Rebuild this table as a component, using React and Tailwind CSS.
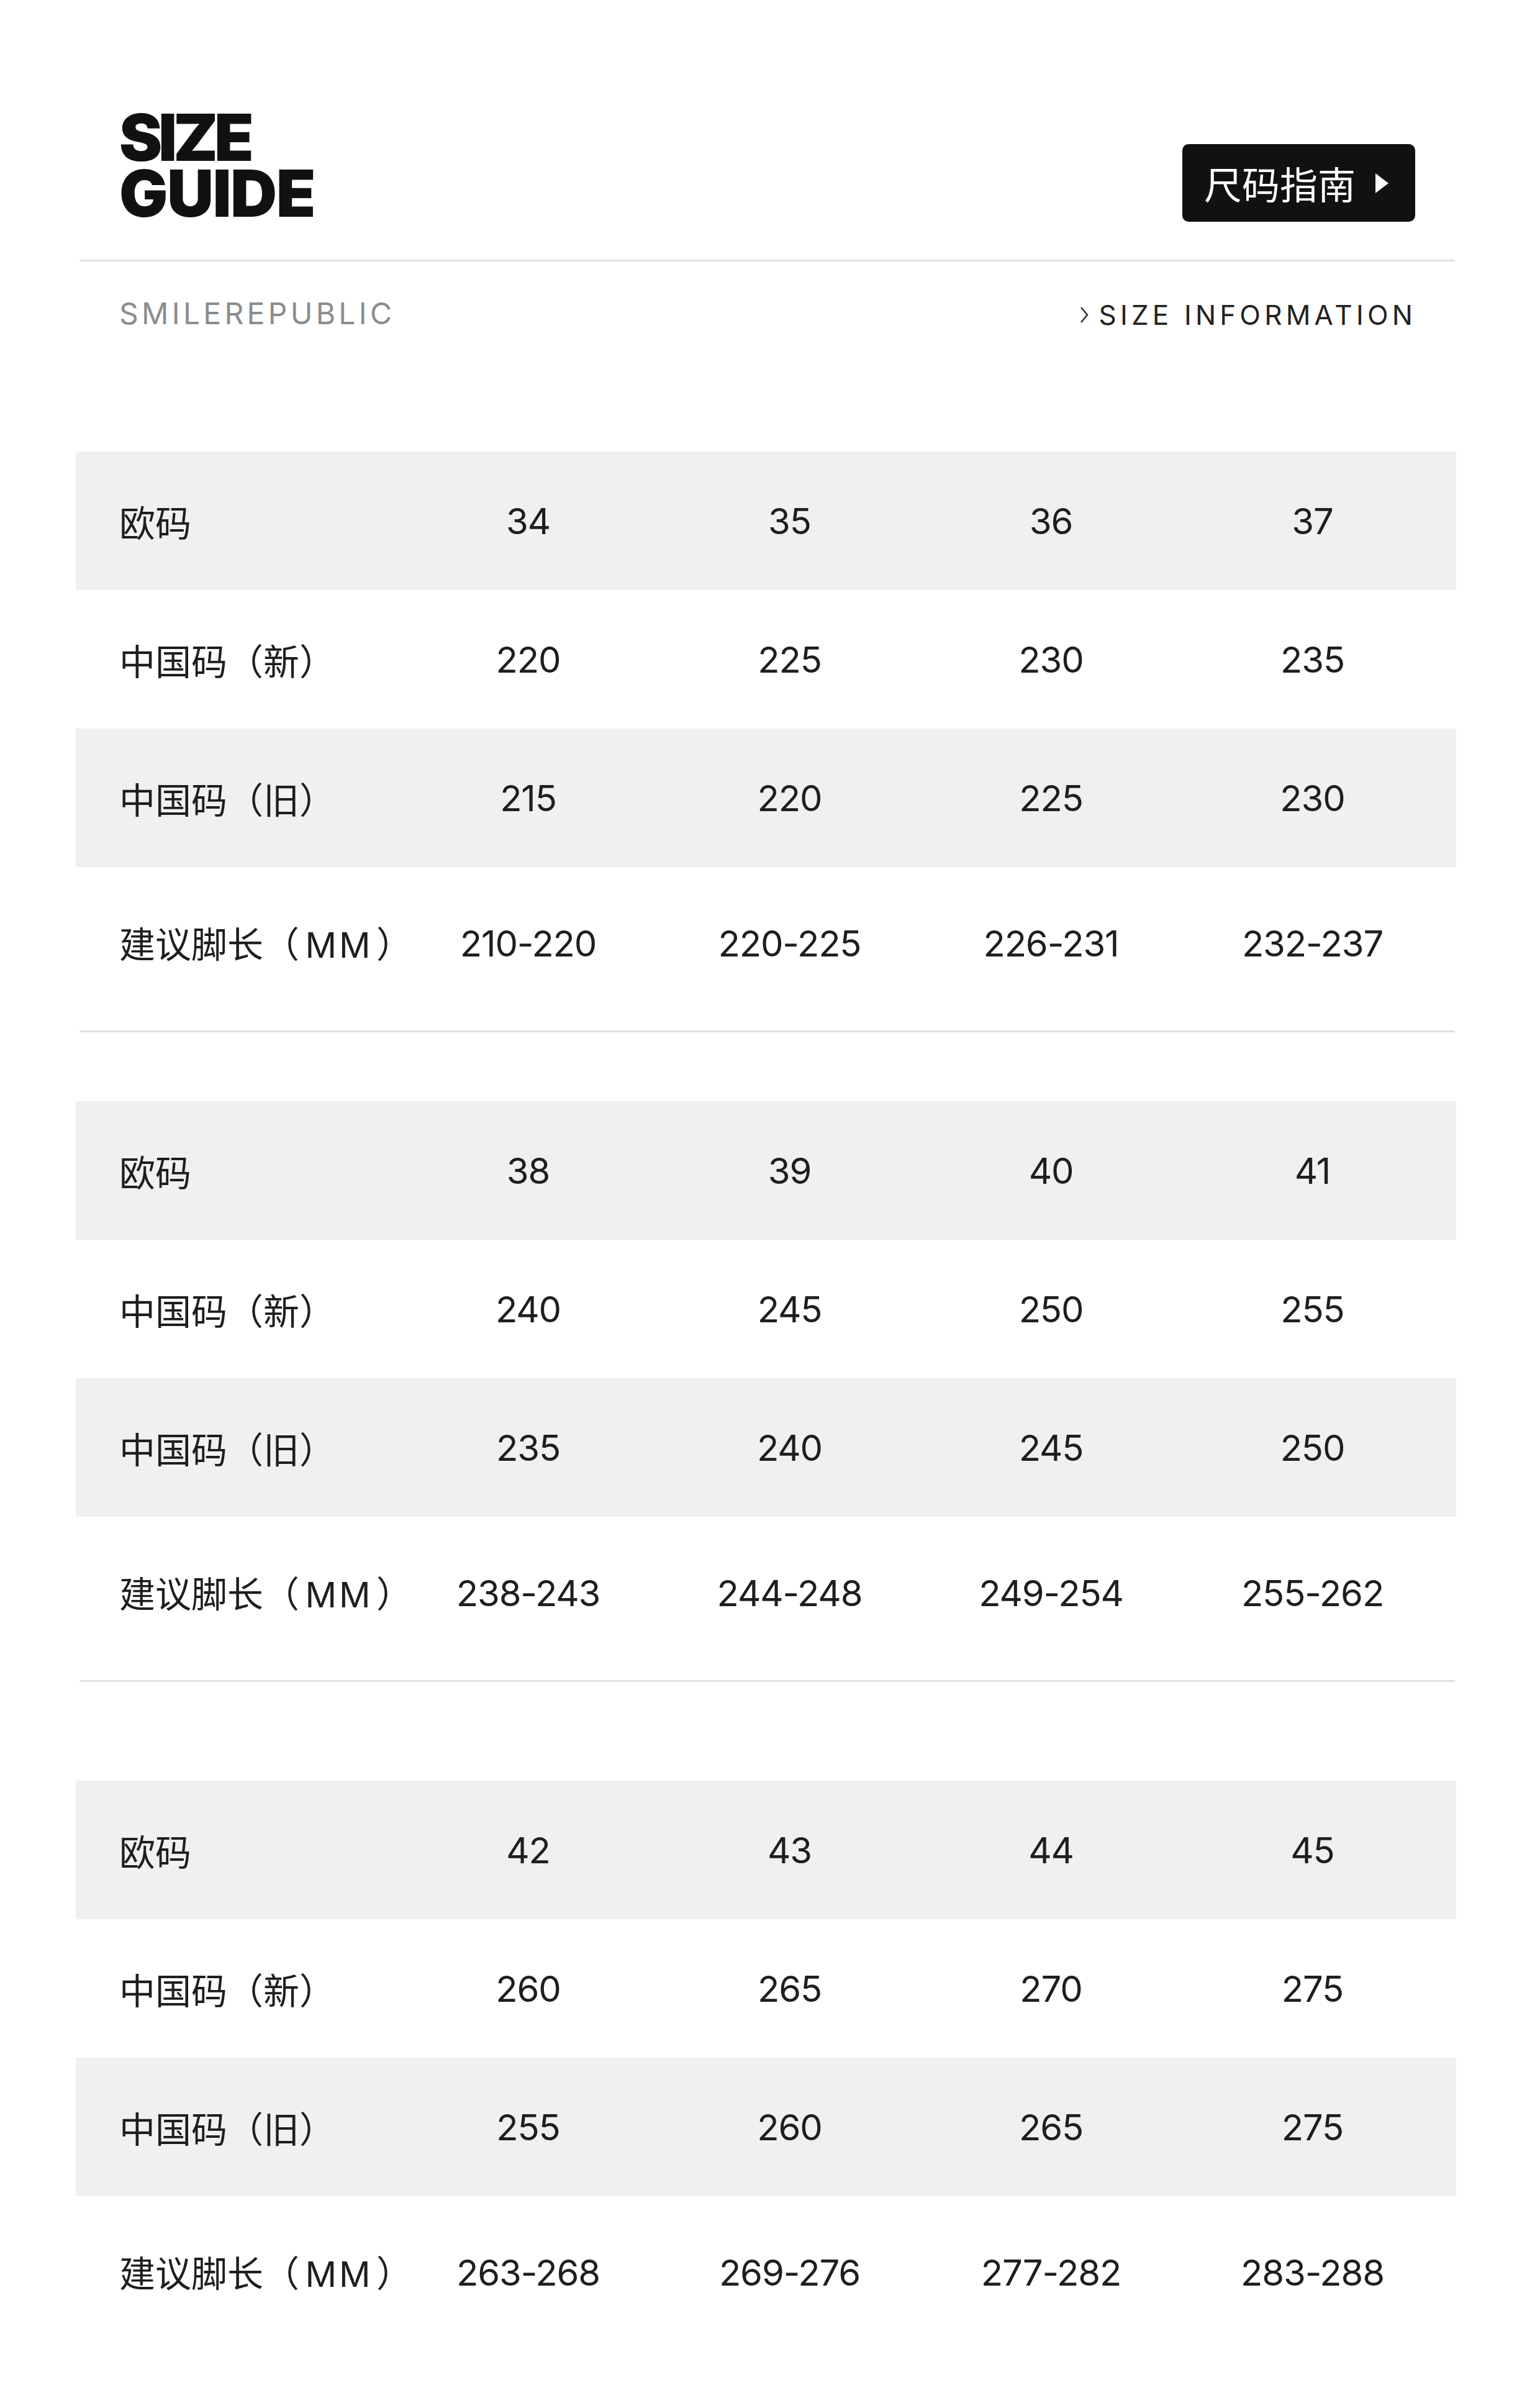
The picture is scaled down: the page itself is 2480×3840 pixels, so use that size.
import React from "react";

const tables = [
  {
    eu: ["34", "35", "36", "37"],
    cnNew: ["220", "225", "230", "235"],
    cnOld: ["215", "220", "225", "230"],
    foot: ["210-220", "220-225", "226-231", "232-237"],
  },
  {
    eu: ["38", "39", "40", "41"],
    cnNew: ["240", "245", "250", "255"],
    cnOld: ["235", "240", "245", "250"],
    foot: ["238-243", "244-248", "249-254", "255-262"],
  },
  {
    eu: ["42", "43", "44", "45"],
    cnNew: ["260", "265", "270", "275"],
    cnOld: ["255", "260", "265", "275"],
    foot: ["263-268", "269-276", "277-282", "283-288"],
  },
];

function Row({ label, values, gray, tall }) {
  return (
    <div
      className={`grid grid-cols-[518px_repeat(4,421px)] items-center ${
        tall ? "h-[245px]" : "h-[223px]"
      } ${gray ? "bg-[#f0f0f0]" : "bg-white"}`}
    >
      <div className="pl-[70px] text-[58px] leading-none text-[#1e1e1e] font-['Noto_Sans_CJK_SC',sans-serif] whitespace-nowrap">
        {label}
      </div>
      {values.map((v, i) => (
        <div
          key={i}
          className="text-center text-[58px] leading-none text-[#1e1e1e] tracking-[-0.02em] font-['Inter','Noto_Sans_CJK_SC',sans-serif]"
        >
          {v}
        </div>
      ))}
    </div>
  );
}

const FootLabel = (
  <>
    建议脚长（
    <span className="inline-block w-[124px] text-center pl-[4px] tracking-[4px] font-['Inter',sans-serif] text-[56px] font-normal">
      MM
    </span>
    ）
  </>
);

function Table({ t }) {
  return (
    <div className="flex flex-col">
      <Row label="欧码" values={t.eu} gray />
      <Row label="中国码（新）" values={t.cnNew} />
      <Row label="中国码（旧）" values={t.cnOld} gray />
      <Row label={FootLabel} values={t.foot} tall />
    </div>
  );
}

export default function App() {
  return (
    <div className="w-[2480px] min-h-[3840px] bg-white">
      <div className="ml-[122px] w-[2223px] pb-[58px]">
        {/* Header */}
        <div className="flex justify-between items-start pt-[176px] pl-[70px] pr-[66px]">
          <h1 className="font-['Inter',sans-serif] font-black text-[104px] text-[#111]">
            <div className="h-[90px] leading-[90px] tracking-[-0.06em]">SIZE</div>
            <div className="h-[90px] leading-[90px] tracking-[-0.015em]">GUIDE</div>
          </h1>
          <div className="mt-[56px] h-[125px] w-[375px] rounded-[10px] bg-[#111] flex items-center pl-[35px]">
            <span className="text-[61px] leading-none text-white font-['Noto_Sans_CJK_SC',sans-serif]">
              尺码指南
            </span>
            <svg
              className="ml-[31px]"
              width="23"
              height="34"
              viewBox="0 0 23 34"
            >
              <path d="M1 1 L22 17 L1 33 Z" fill="#ffffff" />
            </svg>
          </div>
        </div>

        <div className="mt-[61px] ml-[6px] mr-[2px] h-[3px] bg-[#e0e0e0]" />

        <div className="flex justify-between items-baseline mt-[60px] pl-[70px] pr-[64px]">
          <span className="text-[48px] leading-[48px] tracking-[0.11em] text-[#8c8c8c] font-['Inter',sans-serif]">
            SMILEREPUBLIC
          </span>
          <span className="flex items-center text-[44px] leading-[44px] tracking-[0.14em] text-[#222] font-['Inter',sans-serif]">
            <svg
              className="mr-[16px] self-center"
              width="16"
              height="30"
              viewBox="0 0 16 30"
            >
              <polyline
                points="3,3 13,15 3,27"
                fill="none"
                stroke="#333"
                strokeWidth="2.6"
              />
            </svg>
            SIZE INFORMATION
          </span>
        </div>

        <div className="mt-[198px]">
          <Table t={tables[0]} />
        </div>
        <div className="mt-[18px] ml-[6px] mr-[2px] h-[3px] bg-[#e0e0e0]" />

        <div className="mt-[111px]">
          <Table t={tables[1]} />
        </div>
        <div className="mt-[18px] ml-[6px] mr-[2px] h-[3px] bg-[#e0e0e0]" />

        <div className="mt-[159px]">
          <Table t={tables[2]} />
        </div>
      </div>
    </div>
  );
}
